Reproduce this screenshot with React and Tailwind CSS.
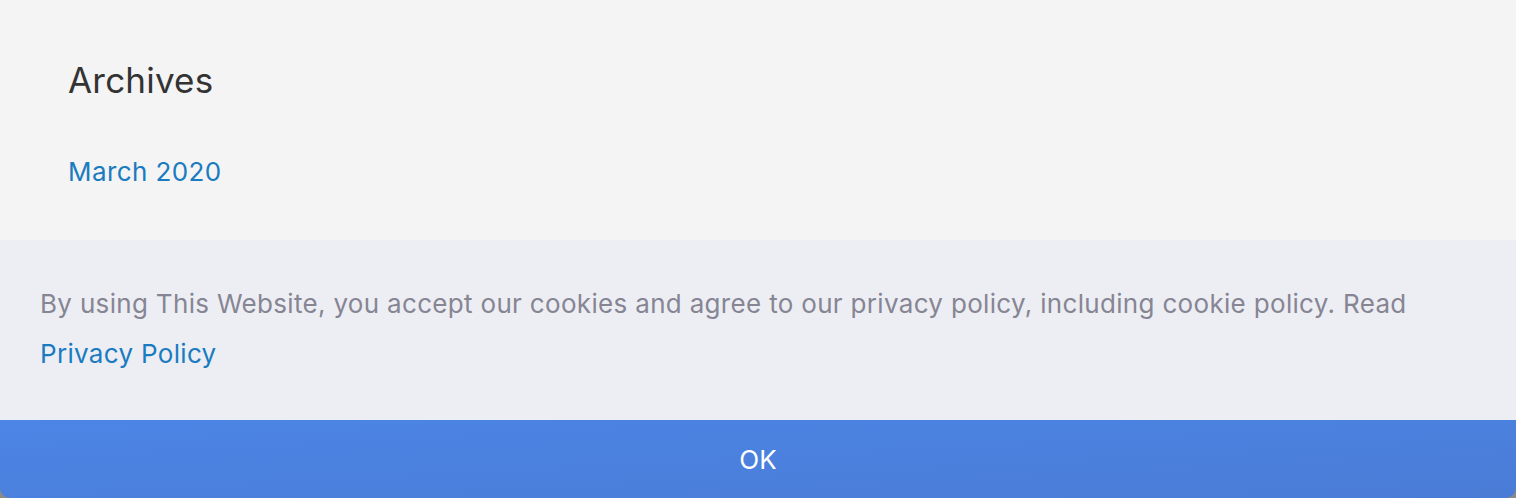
const App = () => {
  return (
    <div
      className="w-[1516px] h-[498px] flex flex-col bg-[#8a8a8a]"
      style={{ fontFamily: "Inter, 'Noto Sans', sans-serif" }}
    >
      {/* Sidebar widget */}
      <div className="h-[240px] bg-[#f4f4f4] px-[68px] pt-[58px]">
        <h2 className="text-[35px] leading-[44px] text-[#333333] tracking-[0.2px]">Archives</h2>
        <a href="#" className="block mt-[55px] text-[26px] leading-[30px] tracking-[0.4px] text-[#1a7bc0]">
          March 2020
        </a>
      </div>

      {/* Cookie notice */}
      <div className="h-[180px] bg-[#edeef3] px-[40px] pt-[39px]">
        <p className="text-[26px] leading-[50px] tracking-[0.32px] text-[#868594]">
          By using This Website, you accept our cookies and agree to our privacy policy, including cookie policy. Read{" "}
          <br />
          <a href="#" className="text-[#1a7bc0]">Privacy Policy</a>
        </p>
      </div>

      <button className="h-[78px] w-full rounded-b-[10px] bg-gradient-to-br from-[#4c85e6] to-[#4a7cd6] text-white text-[26px]">
        OK
      </button>
    </div>
  );
};

export default App;
